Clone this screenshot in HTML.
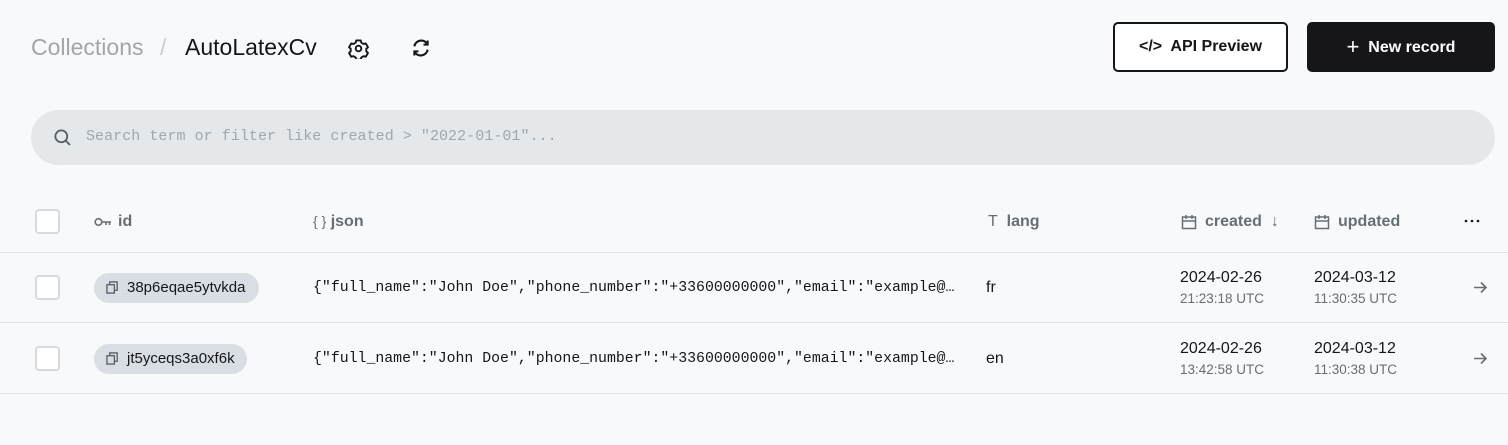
<!DOCTYPE html>
<html><head><style>
*{margin:0;padding:0;box-sizing:border-box}
body{width:1508px;height:445px;background:#f8f9fa;font-family:"Liberation Sans",sans-serif;position:relative;overflow:hidden;color:#16161a}
.a{position:absolute;white-space:nowrap}
.mono{font-family:"Liberation Mono",monospace}
.cb{position:absolute;left:35px;width:25px;height:25px;border:2px solid #d6dbe1;border-radius:4px;background:#fff}
.hd{font-size:16px;font-weight:bold;color:#666f75}
.line{position:absolute;left:0;width:1508px;height:1px;background:#dfe3e8}
.pill{position:absolute;left:94px;height:30px;border-radius:15px;background:#d9dee4;font-size:15px;color:#16161a;padding:0 0 0 33px;line-height:30px}
.d{font-size:16px;color:#16161a}
.t{font-size:13.5px;color:#666f75}
</style></head><body>
<div class="a" style="left:31px;top:34px;font-size:23px;color:#a0a6ab">Collections</div>
<div class="a" style="left:160px;top:34px;font-size:23px;color:#c8ccd0">/</div>
<div class="a" style="left:185px;top:34px;font-size:23px;color:#16161a">AutoLatexCv</div>
<svg class="a" style="left:348px;top:38px" width="21" height="21" viewBox="0 0 24 24" fill="none" stroke="#16161a" stroke-width="2.2" stroke-linejoin="round"><path d="M9.5 2.8h5l.8 2.6 2.4 1.4 2.6-.6 2.5 4.3-1.9 1.9v2.8l1.9 1.9-2.5 4.3-2.6-.6-2.4 1.4-.8 2.6h-5l-.8-2.6-2.4-1.4-2.6.6-2.5-4.3 1.9-1.9v-2.8L1.2 10.5l2.5-4.3 2.6.6 2.4-1.4z"/><circle cx="12" cy="12" r="3.2"/></svg>
<svg class="a" style="left:411px;top:38px" width="20" height="20" viewBox="0 0 24 24" fill="none" stroke="#16161a" stroke-width="2.6"><path d="M4 10a8.5 8.5 0 0 1 15.5-3M20 14a8.5 8.5 0 0 1-15.5 3"/><path d="M20 3v5h-5M4 21v-5h5" stroke-width="2.4"/></svg>
<div class="a" style="left:1113px;top:22px;width:175px;height:50px;border:2px solid #16161a;border-radius:5px;background:#fff;font-size:16px;font-weight:bold;text-align:center;line-height:46px">&lt;/&gt;&nbsp; API Preview</div>
<div class="a" style="left:1307px;top:22px;width:188px;height:50px;border-radius:5px;background:#16161a;color:#fff;font-size:16px;font-weight:bold;text-align:center;line-height:50px"><span style="font-size:22px;font-weight:normal;vertical-align:-2px">+</span>&nbsp; New record</div>
<div class="a" style="left:31px;top:110px;width:1464px;height:55px;border-radius:28px;background:#e4e8ea"></div>
<svg class="a" style="left:53px;top:128px" width="19" height="19" viewBox="0 0 24 24" fill="none" stroke="#555e63" stroke-width="2.3"><circle cx="10.5" cy="10.5" r="7.5"/><path d="M16 16l5.5 5.5"/></svg>
<div class="a mono" style="left:86px;top:128px;font-size:15px;letter-spacing:0.05px;color:#a0a6ab">Search term or filter like created &gt; "2022-01-01"...</div>

<div class="cb" style="top:209px"></div>
<svg class="a" style="left:94px;top:216px" width="18" height="12" viewBox="0 0 18 12" fill="none" stroke="#666f75" stroke-width="1.6"><circle cx="4.5" cy="6" r="3.3"/><path d="M8 6h9M12 6v3M15.5 6v3"/></svg>
<div class="a hd" style="left:118px;top:213px">id</div>
<div class="a hd" style="left:313px;top:213px"><span style="font-weight:normal;font-size:14px">{ }</span> json</div>
<div class="a hd" style="left:988px;top:213px"><span style="font-weight:normal">T</span>&nbsp; lang</div>
<svg class="a" style="left:1181px;top:214px" width="16" height="16" viewBox="0 0 16 16" fill="none" stroke="#666f75" stroke-width="1.5"><rect x="1.5" y="3" width="13" height="11.5"/><path d="M1.5 7h13M5 1v4M11 1v4"/></svg>
<div class="a hd" style="left:1205px;top:213px">created&nbsp; <span style="font-weight:normal">&#x2193;</span></div>
<svg class="a" style="left:1314px;top:214px" width="16" height="16" viewBox="0 0 16 16" fill="none" stroke="#666f75" stroke-width="1.5"><rect x="1.5" y="3" width="13" height="11.5"/><path d="M1.5 7h13M5 1v4M11 1v4"/></svg>
<div class="a hd" style="left:1338px;top:213px">updated</div>
<svg class="a" style="left:1464px;top:219px" width="16" height="4"><circle cx="2" cy="2" r="1.3" fill="#16161a"/><circle cx="8" cy="2" r="1.3" fill="#16161a"/><circle cx="14" cy="2" r="1.3" fill="#16161a"/></svg>
<div class="line" style="top:252px"></div>

<div class="cb" style="top:275px"></div>
<div class="pill" style="top:273px;width:165px">38p6eqae5ytvkda</div>
<div class="a mono" style="left:313px;top:280px;font-size:14.85px">{"full_name":"John Doe","phone_number":"+33600000000","email":"example@…</div>
<div class="a d" style="left:986px;top:279px">fr</div>
<div class="a d" style="left:1180px;top:269px">2024-02-26</div>
<div class="a t" style="left:1180px;top:291px">21:23:18 UTC</div>
<div class="a d" style="left:1314px;top:269px">2024-03-12</div>
<div class="a t" style="left:1314px;top:291px">11:30:35 UTC</div>
<svg class="a" style="left:1473px;top:281px" width="15" height="13" viewBox="0 0 15 13" fill="none" stroke="#666f75" stroke-width="1.6"><path d="M1 6.5h12M8 1.5l5 5-5 5"/></svg>
<div class="line" style="top:322px"></div>

<div class="cb" style="top:346px"></div>
<div class="pill" style="top:344px;width:153px">jt5yceqs3a0xf6k</div>
<div class="a mono" style="left:313px;top:351px;font-size:14.85px">{"full_name":"John Doe","phone_number":"+33600000000","email":"example@…</div>
<div class="a d" style="left:986px;top:350px">en</div>
<div class="a d" style="left:1180px;top:340px">2024-02-26</div>
<div class="a t" style="left:1180px;top:362px">13:42:58 UTC</div>
<div class="a d" style="left:1314px;top:340px">2024-03-12</div>
<div class="a t" style="left:1314px;top:362px">11:30:38 UTC</div>
<svg class="a" style="left:1473px;top:352px" width="15" height="13" viewBox="0 0 15 13" fill="none" stroke="#666f75" stroke-width="1.6"><path d="M1 6.5h12M8 1.5l5 5-5 5"/></svg>
<div class="line" style="top:393px"></div>

<svg class="a" style="left:106px;top:281px" width="13" height="13" viewBox="0 0 14 14" fill="none" stroke="#555e63" stroke-width="1.4"><rect x="1" y="4" width="8" height="9"/><path d="M4 4V1h8v9H9"/></svg>
<svg class="a" style="left:106px;top:352px" width="13" height="13" viewBox="0 0 14 14" fill="none" stroke="#555e63" stroke-width="1.4"><rect x="1" y="4" width="8" height="9"/><path d="M4 4V1h8v9H9"/></svg>
</body></html>
